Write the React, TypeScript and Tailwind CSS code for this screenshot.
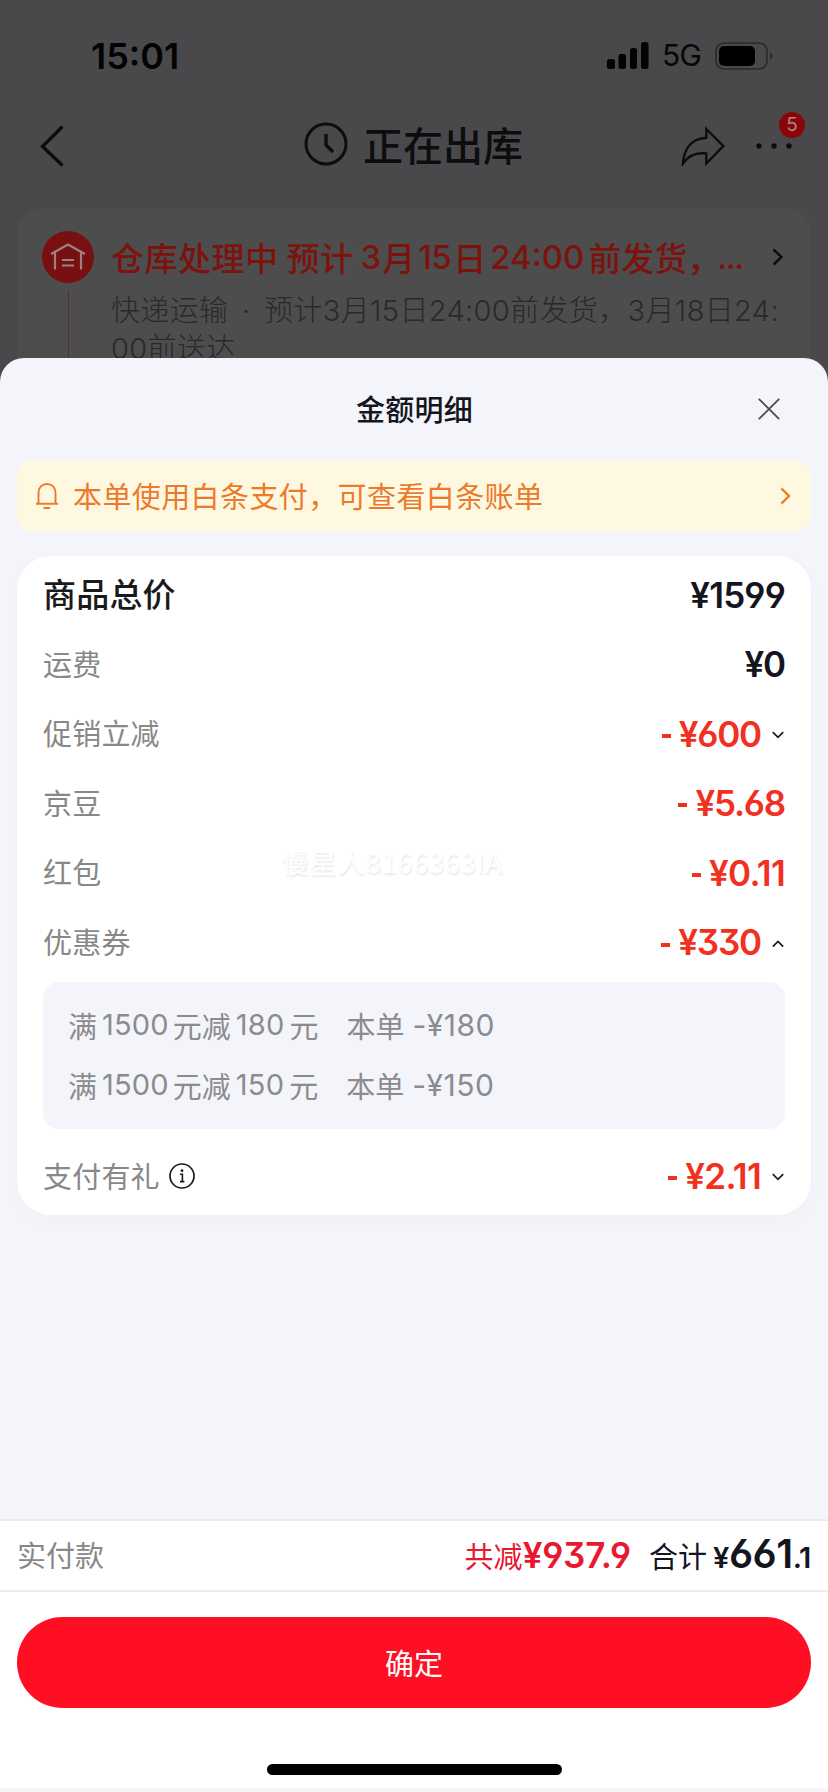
import { useState } from 'react'
import type { ReactNode } from 'react'

type Detail = {
  label: string
  value: string
  tone?: 'dark' | 'red'
  arrow?: 'up' | 'down'
  info?: boolean
  wide?: boolean
}

const details: Detail[] = [
  { label: '运费', value: '0', tone: 'dark' },
  { label: '促销立减', value: '600', arrow: 'down' },
  { label: '京豆', value: '5.68' },
  { label: '红包', value: '0.11', wide: true },
  { label: '优惠券', value: '330', arrow: 'up' },
]

const coupons = [
  { full: '1500', cut: '180' },
  { full: '1500', cut: '150' },
]

// 价格数字
function Num({ children, className = '' }: { children: ReactNode; className?: string }) {
  return (
    <span
      className={`font-[Inter,sans-serif] font-semibold [font-feature-settings:'cv03','cv04','cv09'] ${className}`}
    >
      {children}
    </span>
  )
}

function Arrow({ dir }: { dir: 'up' | 'down' }) {
  return (
    <svg width="12" height="8" viewBox="0 0 12 8" fill="none" className="mt-[2px] ml-[11px] mr-px">
      <path
        d={dir === 'down' ? 'M.8 1.2 6 6.4l5.2-5.2' : 'M.8 6.6 6 1.4l5.2 5.2'}
        stroke="#1a1a1a"
        strokeWidth="1.7"
      />
    </svg>
  )
}

function Row({ item }: { item: Detail }) {
  return (
    <div className="flex h-[69.6px] items-center justify-between">
      <div className="mt-[-1px] flex items-center text-[29px] tracking-[0.2px] text-[#888888]">
        {item.label}
        {item.info && (
          <svg width="26" height="28" viewBox="0 0 26 28" fill="none" className="mt-px ml-[9px]">
            <circle cx="13" cy="14" r="12" stroke="#1a1a1a" strokeWidth="1.7" />
            <circle cx="13" cy="8.7" r="1.4" fill="#1a1a1a" />
            <path d="M11 12.2h2.4v7.2M11 19.6h4.4" stroke="#1a1a1a" strokeWidth="1.6" />
          </svg>
        )}
      </div>
      <div className={`mt-px flex items-center ${item.tone === 'dark' ? 'text-[#14151f]' : 'text-[#f2301f]'}`}>
        {item.tone !== 'dark' && <span className="mt-[4px] mr-[8px] h-[4px] w-[9px] bg-[#f2301f]" />}
        <Num className={item.wide ? 'text-[35px] tracking-[-0.7px]' : 'text-[35px] tracking-[-1.2px]'}>
          ¥{item.value}
        </Num>
        {item.arrow && <Arrow dir={item.arrow} />}
      </div>
    </div>
  )
}

function StatusBar() {
  return (
    <div className="flex h-[110px] items-center justify-between pl-[91px] pr-[55px] pt-px">
      <span className="font-[Inter,sans-serif] text-[36px] font-semibold text-[#030304]">15:01</span>
      <div className="flex items-center">
        <svg width="42" height="27" viewBox="0 0 42 27" fill="#030304">
          <rect x="0" y="17" width="8" height="10" rx="2.5" />
          <rect x="11.5" y="12" width="7.5" height="15" rx="2.5" />
          <rect x="23" y="6" width="7" height="21" rx="2.5" />
          <rect x="34" y="0" width="7.5" height="27" rx="2.5" />
        </svg>
        <span className="ml-[13px] font-[Inter,sans-serif] text-[30px] tracking-[-0.8px] text-[#070708]">5G</span>
        <svg width="58" height="28" viewBox="0 0 58 28" fill="none" className="ml-[14px]">
          <rect x="1" y="1" width="51" height="26" rx="8" stroke="#2a2a2b" strokeWidth="1.6" />
          <rect x="4" y="4" width="36" height="20" rx="5" fill="#000" />
          <path d="M55 10c3 1.5 3 6.5 0 8z" fill="#2a2a2b" />
        </svg>
      </div>
    </div>
  )
}

function NavBar() {
  return (
    <div className="flex h-[98px] items-start pl-[40px]">
      <svg width="24" height="42" viewBox="0 0 24 42" fill="none" className="mt-[15px]">
        <path d="M21.5 2.5 2.5 21.5l19 18" stroke="#0d0d0f" strokeWidth="3.4" strokeLinecap="round" />
      </svg>
      <div className="ml-[240px] flex items-center">
        <svg width="44" height="44" viewBox="0 0 44 44" fill="none">
          <circle cx="22" cy="22" r="20" stroke="#0d0d0f" strokeWidth="3" />
          <path d="M22 12v11l7 7" stroke="#0d0d0f" strokeWidth="3.4" />
        </svg>
        <span className="ml-[15px] text-[40px] leading-[68px] font-medium text-[#0d0d0f]">正在出库</span>
      </div>
      <svg width="44" height="40" viewBox="0 0 44 40" fill="none" className="mt-[16px] ml-[158px]">
        <path
          d="M25.3 3 42.3 20 25.3 37.5V27.5C15 26.2 7 30 2 37.5 3 22 11 12.5 25.3 11.7Z"
          stroke="#0d0d0f"
          strokeWidth="2.4"
        />
      </svg>
      <div className="relative ml-[30px] h-[60px] w-[50px]">
        <svg width="38" height="8" viewBox="0 0 38 8" fill="#0d0d0f" className="mt-[32px]">
          <circle cx="4" cy="4" r="2.7" />
          <circle cx="19" cy="4" r="2.7" />
          <circle cx="34" cy="4" r="2.7" />
        </svg>
        <span className="absolute top-[2px] right-0 flex size-[26px] items-center justify-center rounded-full bg-[#8b0408] font-[Inter,sans-serif] text-[19px] text-[#b08385]">
          5
        </span>
      </div>
    </div>
  )
}

// 物流信息卡片
function DeliveryCard() {
  return (
    <div className="mx-[17px] flex h-[150px] rounded-t-[26px] bg-[#4d4d4e] pl-[25px]">
      <div className="flex w-[52px] flex-col items-center pt-[23px]">
        <svg width="52" height="52" viewBox="0 0 52 52" fill="none">
          <circle cx="26" cy="26" r="26" fill="#781012" />
          <path
            d="M10 23.5v-1L26 13.5l16 9v1M13 21v17.5M39 21v17.5M20 29h12M20 34.5h12"
            stroke="#9c8282"
            strokeWidth="2.2"
          />
        </svg>
        <div className="mt-[7px] w-px grow bg-[#5a2c2b]" />
      </div>
      <div className="ml-[17px] w-[690px] overflow-hidden pt-[23px]">
        <div className="flex items-center">
          <div className="flex h-[52px] w-[633px] text-[33px] leading-[52px] font-medium whitespace-pre text-[#7c130f]">
            <span className="tracking-[0.5px]">仓库处理中 预计</span>
            <span className="mr-px ml-[7px] font-[Inter,sans-serif]">3</span>
            <span>月</span>
            <span className="mr-[2px] ml-[3px] font-[Inter,sans-serif] tracking-[-0.5px]">15</span>
            <span>日</span>
            <span className="mr-[4px] ml-[4px] font-[Inter,sans-serif]">24:00</span>
            <span>前发货，</span>
            <span className="ml-[-3px] font-[Inter,sans-serif] tracking-[-1.6px]">...</span>
          </div>
          <svg width="12" height="18" viewBox="0 0 12 18" fill="none" className="ml-[28px]">
            <path d="m1.5 1.5 8 7.5-8 7.5" stroke="#0d0d0f" strokeWidth="2.4" />
          </svg>
        </div>
        <p className="mt-[9px] font-[Inter,'Noto_Sans_CJK_SC',sans-serif] text-[29px] leading-[38px] font-light tracking-[0.36px] whitespace-pre text-[#29292a]">
          快递运输<span className="mx-[5px]"> · </span>预计3月15日24:00前发货，3月18日24:{'\n'}00前送达
        </p>
      </div>
    </div>
  )
}

export default function App() {
  const [open, setOpen] = useState(true)

  return (
    <div className="h-[1792px] w-[828px] overflow-hidden bg-[#49494b] font-['Noto_Sans_CJK_SC',sans-serif]">
      <div className="h-[358px] overflow-hidden">
        <StatusBar />
        <NavBar />
        <DeliveryCard />
      </div>

      {open && (
        <div className="relative flex h-[1434px] flex-col rounded-t-[24px] bg-[#f4f5fa]">
          <div className="flex h-[102px] items-center justify-between pr-[48px] pl-[70px]">
            <span />
            <h2 className="ml-px text-[29px] font-medium tracking-[0.2px] text-[#14151f]">金额明细</h2>
            <button onClick={() => setOpen(false)}>
              <svg width="22" height="22" viewBox="0 0 22 22" fill="none">
                <path d="m.8.8 20.4 20.4M21.2.8.8 21.2" stroke="#4a4b50" strokeWidth="1.8" />
              </svg>
            </button>
          </div>

          <div className="mx-[17px] flex h-[72px] shrink-0 items-center rounded-[16px] bg-[#fff8e0] pr-[20px] pl-[18px] text-[#ec7a2b]">
            <svg width="24" height="28" viewBox="0 0 24 28" fill="none" stroke="currentColor" strokeWidth="1.9">
              <path d="M1 21.8h22M3.5 21.8V11C3.5 5.5 7 2 12 2s8.5 3.5 8.5 9v10.8M8.5 26h6.5" />
            </svg>
            <span className="ml-[14px] grow text-[29px] tracking-[0.4px]">本单使用白条支付，可查看白条账单</span>
            <svg width="11" height="18" viewBox="0 0 11 18" fill="none">
              <path d="m1.5 1.5 7.5 7.5-7.5 7.5" stroke="currentColor" strokeWidth="2.4" />
            </svg>
          </div>

          <div className="relative mx-[17px] mt-[24px] h-[659px] shrink-0 rounded-[34px] bg-white px-[26px] pt-[3px] shadow-[0_6px_20px_rgba(0,0,0,0.02)]">
            <div className="flex h-[70px] items-center justify-between">
              <span className="text-[33px] font-medium tracking-[0.2px] text-[#1a1a1a]">商品总价</span>
              <Num className="mt-[2px] text-[35px] tracking-[-0.8px] text-[#14151f]">¥1599</Num>
            </div>
            {details.map((item) => (
              <Row key={item.label} item={item} />
            ))}
            <div className="mt-[5px] flex h-[147px] flex-col justify-center rounded-[16px] bg-[#f4f5fa] pl-[25px]">
              {coupons.map((c) => (
                <div key={c.cut} className="flex h-[60px] items-center text-[29px] leading-[40px] text-[#8b8b90]">
                  满
                  <span className="mr-[4px] ml-[5px] font-[Inter,sans-serif] tracking-[0.2px]">{c.full}</span>
                  元减
                  <span className="mx-[5px] font-[Inter,sans-serif] tracking-[0.2px]">{c.cut}</span>
                  元
                  <span className="ml-[28px]">本单</span>
                  <span className="ml-[8px] font-[Inter,sans-serif] text-[30px] tracking-[0.5px]">-¥{c.cut}</span>
                </div>
              ))}
            </div>
            <div className="mt-[12px]">
              <Row item={{ label: '支付有礼', value: '2.11', arrow: 'down', info: true, wide: true }} />
            </div>
            {/* 水印 */}
            <span className="absolute top-[285px] left-[264px] text-[27.5px] tracking-[0.6px] whitespace-nowrap text-white [text-shadow:1px_2px_2px_rgba(0,0,0,0.09)]">
              慢星人8166363IA
            </span>
          </div>

          <div className="mt-auto h-[273px] shrink-0 bg-white">
            <div className="flex h-[73px] items-center justify-between border-y-2 border-[#ececef] px-[17px]">
              <span className="mt-[-2px] text-[29px] text-[#888888]">实付款</span>
              <div className="mt-[-4px] flex items-baseline text-[29px]">
                <span className="text-[#e8182f]">共减</span>
                <Num className="text-[35px] tracking-[-0.2px] text-[#e8182f]">¥937.9</Num>
                <span className="ml-[18px] text-[#14151f]">合计</span>
                <Num className="ml-[6px] text-[29px] tracking-[-0.3px] text-[#14151f]">
                  ¥<span className="text-[40px] tracking-[-0.5px]">661</span>.1
                </Num>
              </div>
            </div>
            <button
              onClick={() => setOpen(false)}
              className="mx-[17px] mt-[25px] block h-[91px] w-[794px] rounded-full bg-[#ff0f23] text-[29px] text-white"
            >
              确定
            </button>
            <div className="mx-auto mt-[56px] h-[11px] w-[295px] rounded-full bg-black" />
            <div className="mt-[13px] h-[4px] bg-[#f4f5fa]" />
          </div>
        </div>
      )}
    </div>
  )
}
